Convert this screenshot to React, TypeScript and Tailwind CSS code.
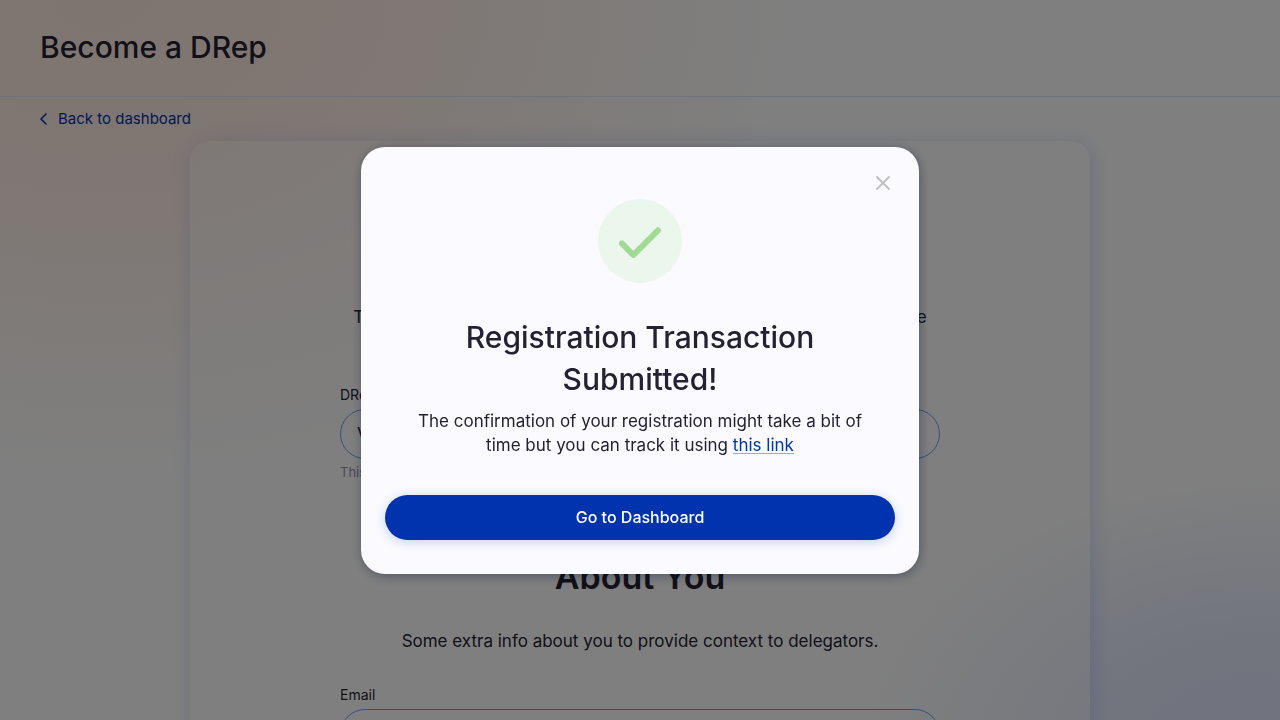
import type { ReactNode } from "react";

function SectionHeading({ tag, title, children }: { tag: string; title: string; children: ReactNode }) {
  return (
    <div className="text-center">
      <p className="text-[17px] leading-6">{tag}</p>
      <h2 className="text-[34px] leading-12 font-semibold">{title}</h2>
      <p className="mt-7 text-[17px] leading-6">{children}</p>
    </div>
  );
}

function Field({ id, label, value, helper }: { id: string; label: string; value?: string; helper?: string }) {
  return (
    <div className="mt-8 flex flex-col">
      <label htmlFor={id} className="text-sm leading-5">
        {label}
      </label>
      <input
        id={id}
        defaultValue={value}
        className="mt-1 h-[50px] w-full rounded-full border border-[#6f99ff] bg-transparent px-4 text-[17px] outline-none"
      />
      {helper && <p className="mt-1 text-[13px] leading-[18px] text-[#9792b5]">{helper}</p>}
    </div>
  );
}

function SuccessModal() {
  return (
    <div className="fixed inset-0 flex items-center justify-center bg-black/50 p-4">
      <div
        role="dialog"
        aria-modal="true"
        aria-labelledby="modal-title"
        className="relative flex w-full max-w-[558px] flex-col items-center rounded-3xl bg-[#fbfbff] px-6 pt-[52px] pb-[34px] shadow-[1px_2px_11px_0_#00123d5e]"
      >
        <button type="button" aria-label="Close" className="absolute top-6 right-6 size-6 text-[#c0c0c0]">
          <svg viewBox="0 0 24 24" fill="none" stroke="currentColor" strokeWidth="2" strokeLinecap="round">
            <path d="M6 6 18 18M18 6 6 18" />
          </svg>
        </button>
        <svg className="size-[84px]" viewBox="0 0 84 84" fill="none" aria-hidden="true">
          <circle cx="42" cy="42" r="42" fill="#ebf6ec" />
          <path d="M24 44.5 35.3 56 60 31.3" stroke="#a1d996" strokeWidth="6" strokeLinecap="round" strokeLinejoin="round" />
        </svg>
        <h2 id="modal-title" className="mt-[33px] max-w-[420px] text-center text-[30px] leading-[42px] font-medium">
          Registration Transaction Submitted!
        </h2>
        <p className="mt-[9px] max-w-[460px] text-center text-[17px] leading-6">
          The confirmation of your registration might take a bit of time but you can track it using{" "}
          <a href="#transaction" className="text-[#0033ad] underline decoration-[#0033ad]/40 underline-offset-2">
            this link
          </a>
        </p>
        <button
          type="button"
          className="mt-[38px] h-[45px] w-full rounded-full bg-[#0033ad] text-base font-medium text-white shadow-[0_2px_12px_0_#0033ad38]"
        >
          Go to Dashboard
        </button>
      </div>
    </div>
  );
}

export default function App() {
  return (
    <div className="h-screen overflow-hidden bg-white bg-[radial-gradient(ellipse_700px_480px_at_8%_0%,#ffebe0_0%,#ffeee6_35%,#ffffff00_100%),radial-gradient(ellipse_400px_280px_at_98%_105%,#dfe4fa_0%,#e6ecfd_45%,#ffffff00_100%)] font-['Inter','Liberation_Sans',sans-serif] text-[#242232]">
      <header className="border-b border-[#d6e2ff] px-10 pt-[23px] pb-[25px]">
        <h1 className="text-[30px] leading-12 font-medium">Become a DRep</h1>
      </header>
      <main className="px-10 pt-3">
        <a href="#dashboard" className="flex w-fit items-center text-[15px] leading-5 text-[#0033ad]">
          <svg className="mr-[11px] h-3 w-[7px]" viewBox="0 0 7 12" fill="none" stroke="currentColor" strokeWidth="1.5" strokeLinecap="round" strokeLinejoin="round" aria-hidden="true">
            <path d="M6 1 1 6 6 11" />
          </svg>
          Back to dashboard
        </a>
        <section className="mx-auto mt-3 max-w-[900px] rounded-[20px] bg-white/30 px-6 pt-16 pb-16 shadow-[2px_2px_20px_0_rgba(47,98,220,0.2)]">
          <div className="mx-auto max-w-[600px]">
            <SectionHeading tag="REQUIRED" title="DRep Name">
              This is the name that will be available on your public profile to everyone
              <br />
              looking for a DRep.
            </SectionHeading>
            <Field id="drep-name" label="DRep Name" value="Voter" helper="This name is public" />
            <div className="mt-12">
              <SectionHeading tag="OPTIONAL" title="About You">
                Some extra info about you to provide context to delegators.
              </SectionHeading>
            </div>
            <Field id="email" label="Email" />
          </div>
        </section>
      </main>
      <SuccessModal />
    </div>
  );
}
